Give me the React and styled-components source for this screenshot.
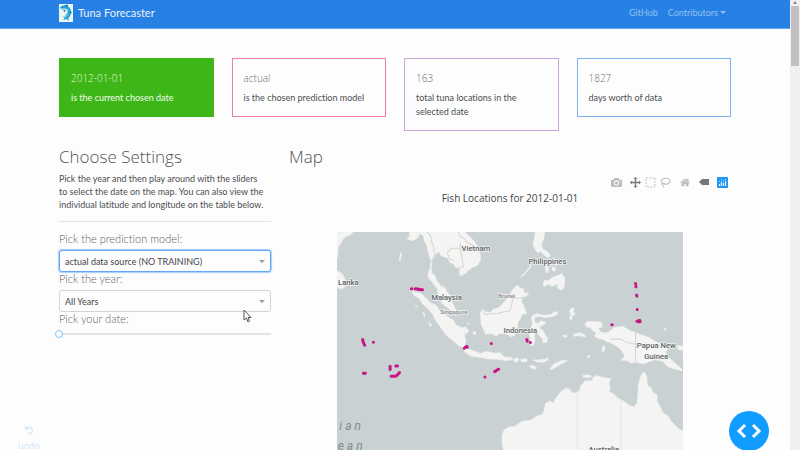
import React, { useState } from "react";
import styled, { createGlobalStyle, css } from "styled-components";

const GlobalStyle = createGlobalStyle`
  *, *::before, *::after { box-sizing: border-box; }
  body {
    margin: 0;
    background: #fdfdfe;
    color: #4c4e51;
    font-family: Lato, "Open Sans", sans-serif;
    font-size: 9px;
    line-height: 13px;
    font-variant-ligatures: none;
  }
  button, select, input { font: inherit; color: inherit; }
`;

const Window = styled.div`
  position: relative;
  display: flex;
  height: 100vh;
  overflow: hidden;
`;

const Page = styled.div`
  flex: 1;
  min-width: 0;
  overflow: hidden;
`;

const Scrollbar = styled.div`
  flex: none;
  width: 10px;
  padding: 6px 1px 0;
  background: #f0eff1;
`;

const ScrollUp = styled.div`
  width: 4px;
  margin: -5px auto 1px;
  border: 2px solid transparent;
  border-top: 0;
  border-bottom: 3px solid #8b8b8d;
`;

const ScrollThumb = styled.div`
  height: 60px;
  margin-top: 2px;
  background: #c1c0c2;
`;

const Container = styled.div`
  width: 100%;
  max-width: 708px;
  margin: 0 auto;
  padding: 0 18px;
`;

const Navbar = styled.header`
  background: #2780e3;
  border-bottom: 1px solid #69a6ef;
`;

const NavRow = styled(Container)`
  display: flex;
  align-items: center;
  height: 28px;
  padding-bottom: 3px;
`;

const Brand = styled.a`
  display: flex;
  align-items: center;
  gap: 5px;
  color: #e8f2fd;
  font-size: 11px;
  text-decoration: none;
`;

const NavLinks = styled.nav`
  display: flex;
  gap: 10px;
  margin-left: auto;
  padding-right: 5px;
`;

const navItem = css`
  display: flex;
  align-items: center;
  gap: 2px;
  padding: 0;
  border: 0;
  background: none;
  color: #92c0f3;
  font-size: 9px;
  line-height: 13px;
  text-decoration: none;
`;

const NavLink = styled.a`${navItem}`;
const NavButton = styled.button`${navItem}`;

const Caret = styled.span`
  border: 3px solid transparent;
  border-top-color: currentColor;
  border-bottom: 0;
`;

const Cards = styled.section`
  display: grid;
  grid-template-columns: repeat(4, 1fr);
  align-items: start;
  gap: 18px;
  margin-top: 29px;
`;

const Card = styled.article`
  padding: 12px 11px 11px;
  border: 1px solid ${(p) => p.$border};
  background: ${(p) => p.$fill || "transparent"};
  color: ${(p) => (p.$fill ? "#f1fbee" : "#4c4e51")};
  line-height: 14px;
`;

const CardTitle = styled.h2`
  margin: 0 0 6px;
  color: ${(p) => (p.$light ? "#e3f7dc" : "#6b6c6f")};
  font-family: "Open Sans", sans-serif;
  font-size: 10px;
  font-weight: 300;
  line-height: 14px;
`;

const CardText = styled.p`
  margin: 0;
`;

const Columns = styled.main`
  display: flex;
  gap: 18px;
  margin-top: 16px;
`;

const Settings = styled.section`
  flex: 0 0 calc(33.333% - 12px);
`;

const MapColumn = styled.section`
  flex: 1;
  min-width: 0;
`;

const Heading = styled.h1`
  margin: 0 0 5px;
  color: #515356;
  font-family: "Open Sans", sans-serif;
  font-size: 17px;
  font-weight: 300;
  line-height: 20px;
`;

const Intro = styled.p`
  margin: 0;
  padding-right: 6px;
`;

const Divider = styled.hr`
  margin: 10px 0;
  border: 0;
  border-top: 1px solid #e3e3e6;
`;

const Label = styled.label`
  display: block;
  margin-bottom: 4px;
  color: #606164;
  font-size: 11px;
  font-weight: 300;
  line-height: 14px;
`;

const SelectBox = styled.div`
  display: grid;
  align-items: center;
  & > * { grid-area: 1 / 1; }
`;

const Select = styled.select`
  appearance: none;
  width: 100%;
  height: 22px;
  padding: 0 20px 0 5px;
  border: 1px solid ${(p) => (p.$active ? "#62a8f5" : "#d4d4d6")};
  border-radius: 3px;
  outline: none;
  background: #fdfdfe;
  box-shadow: ${(p) => (p.$active ? "0 0 1px 1px #a5cffa" : "none")};
  color: #444548;
`;

const SelectCaret = styled(Caret)`
  justify-self: end;
  margin-right: 6px;
  color: #97989a;
  pointer-events: none;
`;

const Slider = styled.input`
  appearance: none;
  display: block;
  width: calc(100% + 4px);
  height: 8px;
  margin: 0 0 0 -4px;
  background: linear-gradient(#e4e4e6, #e4e4e6) 4px 3px / 100% 2px no-repeat;
  &::-webkit-slider-thumb {
    appearance: none;
    width: 8px;
    height: 8px;
    border: 1px solid #7cc8f5;
    border-radius: 50%;
    background: #fdfdfe;
  }
`;

const Modebar = styled.div`
  display: flex;
  justify-content: flex-end;
  gap: 4px;
  margin-top: 7px;
  padding-right: 1px;
`;

const ModeGroup = styled.div`
  display: flex;
`;

const ModeButton = styled.button`
  display: grid;
  place-items: center;
  width: 15px;
  height: 16px;
  padding: 0;
  border: 0;
  background: none;
  color: ${(p) => (p.$active ? "#777779" : "#bdbdbf")};
`;

const ChartTitle = styled.h3`
  margin: 1px 0 27px;
  color: #444649;
  font-family: "Open Sans", sans-serif;
  font-size: 10px;
  font-weight: 400;
  line-height: 14px;
  text-align: center;
`;

const MapFrame = styled.div`
  padding: 0 48px;
`;

const MapDrawing = styled.svg`
  display: block;
  width: 100%;
  background: #c9d1d3;
`;

const MapLabel = styled.text`
  fill: ${(p) => (p.$small ? "#858789" : "#626466")};
  stroke: #f4f4f3;
  stroke-width: 4px;
  stroke-linejoin: round;
  paint-order: stroke;
  font-family: Roboto, sans-serif;
  font-size: ${(p) => (p.$small ? 18 : 23)}px;
  font-weight: 500;
  text-anchor: middle;
`;

const OceanLabel = styled.text`
  fill: #838c90;
  font-family: Roboto, sans-serif;
  font-size: 36px;
  font-style: italic;
  letter-spacing: 9px;
`;

const DevButton = styled.button`
  position: absolute;
  right: 31px;
  bottom: -1px;
  display: grid;
  place-items: center;
  width: 40px;
  height: 40px;
  padding: 0;
  border: 0;
  border-radius: 50%;
  background: #119dff;
`;

const UndoButton = styled.button`
  position: absolute;
  left: 18px;
  bottom: -2px;
  display: grid;
  justify-items: center;
  gap: 4px;
  padding: 0;
  border: 0;
  background: none;
  color: #d3e7f6;
  font-family: "Open Sans", sans-serif;
`;

const Pointer = styled.svg`
  position: absolute;
  left: 243px;
  top: 309px;
  pointer-events: none;
`;

function TunaLogo() {
  return (
    <svg width="14" height="18" viewBox="0 0 42 54" aria-hidden="true">
      <rect width="42" height="54" fill="#eef6f5" />
      <path d="M3 12C6 4 18 1 27 7C39 15 40 32 28 43L30 50L23 46L12 49L17 42L11 37C18 40 27 36 30 27C26 35 20 36 17 34C24 31 27 24 23 17C18 18 9 18 3 12Z" fill="#2ba5dc" />
      <path d="M5 13C12 15 19 11 24 15C29 21 27 29 22 33C26 28 27 22 22 17C16 18 9 17 5 13Z" fill="#c9ecf2" />
      <path d="M15 5L26 1L27 9M34 20L39 26L33 29M13 18L16 25L20 18" fill="#167fbd" />
      <circle cx="10" cy="10" r="1.5" fill="#174a70" />
    </svg>
  );
}

const flip = "matrix(1 0 0 -1 0 850)";

function CameraIcon() {
  return (
    <svg width="11" height="11" viewBox="0 0 1000 1000" fill="currentColor">
      <path transform={flip} d="m500 450c-83 0-150-67-150-150 0-83 67-150 150-150 83 0 150 67 150 150 0 83-67 150-150 150z m400 150h-120c-16 0-34 13-39 29l-31 93c-6 15-23 28-40 28h-340c-16 0-34-13-39-28l-31-94c-6-15-23-28-40-28h-120c-55 0-100-45-100-100v-450c0-55 45-100 100-100h800c55 0 100 45 100 100v450c0 55-45 100-100 100z m-400-550c-138 0-250 112-250 250 0 138 112 250 250 250 138 0 250-112 250-250 0-138-112-250-250-250z m365 380c-19 0-35 16-35 35 0 19 16 35 35 35 19 0 35-16 35-35 0-19-16-35-35-35z" />
    </svg>
  );
}

function PanIcon() {
  return (
    <svg width="11" height="11" viewBox="0 0 1000 1000" fill="currentColor">
      <path transform={flip} d="m1000 350l-187 188 0-125-250 0 0 250 125 0-188 187-187-187 125 0 0-250-250 0 0 125-188-188 186-187 0 125 252 0 0-250-125 0 187-188 188 188-125 0 0 250 250 0 0-126 187 188z" />
    </svg>
  );
}

function BoxIcon() {
  return (
    <svg width="11" height="11" viewBox="0 0 11 11" fill="none" stroke="currentColor">
      <rect x="1" y="1" width="9" height="9" strokeDasharray="1.8 1.2" />
    </svg>
  );
}

function LassoIcon() {
  return (
    <svg width="11" height="11" viewBox="0 0 11 11" fill="none" stroke="currentColor" strokeWidth="1.1">
      <path d="M3 7C0 5 1 1.5 5.5 1.2C10 1 11 4 9 6C7.500 7.500 5 7.500 4 6.500C3 5.500 1.500 6.500 2.500 8C3 9 4 9 4 10.500" />
    </svg>
  );
}

function HomeIcon() {
  return (
    <svg width="10" height="11" viewBox="0 0 928 1000" fill="currentColor">
      <path transform={flip} d="m786 296v-267q0-15-11-26t-25-10h-214v214h-143v-214h-214q-15 0-25 10t-11 26v267q0 1 0 2t0 2l321 264 321-264q1-1 1-4z m124 39l-34-41q-5-5-12-6h-2q-7 0-12 3l-386 322-386-322q-7-4-13-4-7 2-12 7l-35 41q-4 5-3 13t6 12l401 334q18 15 42 15t43-15l136-114v109q0 8 5 13t13 5h107q8 0 13-5t5-13v-227l122-102q5-5 6-12t-4-13z" />
    </svg>
  );
}

function TagIcon() {
  return (
    <svg width="10" height="6" viewBox="0 0 10 6" fill="currentColor">
      <path d="M0 3L3 0H10V6H3Z" />
    </svg>
  );
}

function PlotlyIcon() {
  return (
    <svg width="11" height="11" viewBox="0 0 11 11">
      <rect width="11" height="11" rx="1" fill="#1f96f5" />
      <path d="M2.500 9V7M4.500 9V5M6.500 9V6M8.500 9V4" stroke="#e4f3ff" strokeWidth="1.2" />
      <path d="M2.500 5V4M4.500 3.500V2.500M6.500 4.500V3.500M8.500 3V2" stroke="#a9d8ff" strokeWidth="1.200" />
    </svg>
  );
}

const modeGroups = [
  [{ name: "Download plot", Icon: CameraIcon }],
  [
    { name: "Pan", Icon: PanIcon, active: true },
    { name: "Box select", Icon: BoxIcon },
    { name: "Lasso select", Icon: LassoIcon },
  ],
  [{ name: "Reset view", Icon: HomeIcon }],
  [{ name: "Toggle hover", Icon: TagIcon, active: true }],
  [{ name: "Produced with Plotly", Icon: PlotlyIcon }],
];

const land = [
  "M22 21H70L64 29L50 34L38 45L34 56L26 64L25 86L22 100Z",
  "M22 136L32 142L40 150L48 166L49 181L39 191L27 190L22 184Z",
  "M232 42L238 35L240 21H405L416 32L430 46L441 61L450 83L452 105L443 121L428 127L416 135L408 144L391 153L388 139L391 130L377 127L370 116L360 112L354 99L340 95L331 90L330 82L320 83L314 95L307 108L304 126L306 143L315 151L321 167L333 181L344 184L350 199L361 210L364 227L372 242L382 263L377 267L363 255L349 245L337 235L329 221L324 205L322 190L308 172L295 157L294 146L301 130L303 109L299 93L293 75L291 60L284 50L280 31L270 27L262 40L250 47Z",
  "M246 198L260 202L275 205L287 218L303 234L319 240L327 253L343 266L354 276L371 285L377 299L395 307L407 319L404 334L408 346L404 367L389 363L370 347L354 335L340 318L328 300L316 284L309 268L290 246L277 235L269 220L252 211Z",
  "M402 371L416 371L433 378L453 385L469 378L491 383L511 383L523 395L545 397L549 403L530 406L501 402L474 401L447 396L423 392L404 380Z",
  "M451 263L458 253L467 259L482 263L488 253L508 247L523 230L539 214L545 197L561 180L570 188L583 193L579 202L597 205L590 212L576 218L575 229L581 242L590 265L575 268L571 282L565 288L561 309L553 331L543 335L532 327L511 324L498 332L482 325L466 327L461 312L454 300Z",
  "M607 294L604 278L609 270L620 266L640 270L660 269L672 261L684 260L682 268L668 274L645 277L627 273L613 277L612 289L622 295L633 287L648 291L637 301L626 307L640 317L644 327L653 340L651 350L639 353L638 340L628 333L622 320L614 323L614 349L610 361L600 360L601 338L597 321L603 308Z",
  "M616 21H644L640 45L634 57L638 72L652 80L662 91L654 98L640 88L631 78L623 83L613 70L609 55L612 43Z",
  "M642 166L655 167L668 156L684 151L695 145L704 158L703 185L694 196L684 190L680 177L665 184L655 177L642 184L639 178Z",
  "M640 102L651 109L645 116L637 110ZM653 106L666 112L661 124L652 119ZM648 122L656 129L653 144L645 136ZM668 99L680 104L685 118L677 121ZM666 124L677 130L674 140L666 135Z",
  "M573 153L586 142L598 125L605 117L600 129L586 145L574 156Z",
  "M764 296L772 289L791 289L813 291L816 305L804 309L813 322L832 323L852 307L878 304L901 317L930 328L957 337L980 352L1001 357L1012 373L1005 380L1014 396L1032 412L1053 430L1056 437L1034 431L1012 424L997 408L974 403L957 409L941 416L916 411L903 413L889 406L873 405L884 392L869 370L845 354L827 349L819 342L804 340L792 332L799 325L786 315L781 306L770 306Z",
  "M718 257L726 248L733 250L729 260L736 267L726 271L725 285L718 281L722 267Z",
  "M700 329L711 332L708 337L699 334ZM730 327L749 323L764 329L767 335L747 332L731 333ZM817 363L824 363L823 376L816 379ZM771 393L779 389L780 394L774 398Z",
  "M551 402L562 397L567 404L560 411L552 407ZM571 403L590 400L591 409L575 410ZM609 404L625 404L646 402L653 396L654 404L642 411L619 410ZM598 422L610 421L620 427L614 432L602 427ZM661 428L673 415L690 407L711 404L708 409L689 419L672 429L662 434Z",
  "M758 450L775 449L785 453L774 457L760 456Z",
  "M521 675L516 652L516 633L522 614L538 604L554 603L576 588L603 584L619 573L638 567L642 556L646 535L658 527L670 533L680 514L693 499L706 489L721 492L725 502L737 503L749 494L751 482L765 467L790 466L786 459L799 450L812 455L832 459L843 459L836 475L841 486L836 499L851 506L862 518L881 528L896 540L911 544L920 534L923 504L924 480L929 460L936 443L944 442L950 458L951 480L963 487L967 500L980 509L981 530L990 544L996 560L1015 574L1022 587L1034 599L1044 610L1058 616V780H521Z",
  "M208 105L213 83L216 84L211 108ZM258 240L263 246L258 245ZM278 261L286 267L284 274ZM297 287L305 301L301 305ZM398 306L409 306L416 316L411 325L401 316ZM429 320L438 320L437 327L430 327ZM412 292L417 294L416 300Z",
  "M1040 360L1058 364V376L1043 372ZM1000 309L1007 311L1005 317Z",
];

const borders = [
  "M292 21C304 35 310 43 304 50C316 61 307 75 315 90L303 111",
  "M386 21L391 35L402 39L411 52L426 59L432 67",
  "M391 54V70L364 70L352 84L359 101L371 107",
  "M391 70L397 100L400 125L388 128",
  "M331 177L341 188",
  "M459 258L466 268L489 266L506 264L521 260L537 259L545 240L548 221L580 217",
  "M916 322V413",
  "M840 342L868 341L886 350L915 357",
];

const catches = [
  "M245 191H246M256 191H260M260 192H265M266 193H272M274 194H278",
  "M99 343V347M100 349L102 354M104 359L105 360M131 351V351",
  "M101 444H107M181 423V433M198 422H203M184 453H196M197 453L203 449M206 445L209 442",
  "M403 369L406 366M410 363L412 366M484 355H484",
  "M465 455H465M494 439L499 436M502 434L506 432",
  "M590 343L592 348M601 352H601M845 299H846",
  "M916 175V176M917 183V185M919 210L920 213M921 253H921",
  "M920 288H924M925 286V290M929 286V290",
];

function FishMap() {
  return (
    <MapDrawing viewBox="22 21 1036 720" role="img" aria-label="Fish locations">
      {land.map((d) => (
        <path key={d} d={d} fill="#f4f4f3" stroke="#edf0ef" strokeWidth="2" strokeLinejoin="round" />
      ))}
      {borders.map((d) => (
        <path key={d} d={d} fill="none" stroke="#d2d4d4" strokeWidth="3" />
      ))}
      <path d="M741 502V741M872 524V741" stroke="#e6e6e6" strokeWidth="3" />
      <MapLabel x="438" y="79">Vietnam</MapLabel>
      <MapLabel x="652" y="117">Philippines</MapLabel>
      <MapLabel x="56" y="179">Lanka</MapLabel>
      <MapLabel x="350" y="224">Malaysia</MapLabel>
      <MapLabel x="372" y="268" $small>Singapore</MapLabel>
      <MapLabel x="530" y="220" $small>Brunei</MapLabel>
      <MapLabel x="571" y="323">Indonesia</MapLabel>
      <MapLabel x="978" y="369">Papua New</MapLabel>
      <MapLabel x="978" y="400">Guinea</MapLabel>
      <MapLabel x="821" y="679">Australia</MapLabel>
      <OceanLabel x="29" y="615">ian</OceanLabel>
      <OceanLabel x="24" y="674">ean</OceanLabel>
      {catches.map((d) => (
        <path key={d} d={d} fill="none" stroke="#c71585" strokeWidth="9" strokeLinecap="round" />
      ))}
    </MapDrawing>
  );
}

const stats = [
  { title: "2012-01-01", text: "is the current chosen date", border: "#3fb618", fill: "#3fb618" },
  { title: "actual", text: "is the chosen prediction model", border: "#f07f98" },
  { title: "163", text: "total tuna locations in the selected date", border: "#c9a6dc" },
  { title: "1827", text: "days worth of data", border: "#7eb4f0" },
];

export default function App() {
  const [day, setDay] = useState(0);

  return (
    <>
      <GlobalStyle />
      <Window>
        <Page>
          <Navbar>
            <NavRow>
              <Brand href="#">
                <TunaLogo />
                Tuna Forecaster
              </Brand>
              <NavLinks>
                <NavLink href="#github">GitHub</NavLink>
                <NavButton type="button">
                  Contributors
                  <Caret />
                </NavButton>
              </NavLinks>
            </NavRow>
          </Navbar>
          <Container>
            <Cards>
              {stats.map((s) => (
                <Card key={s.title} $border={s.border} $fill={s.fill}>
                  <CardTitle $light={Boolean(s.fill)}>{s.title}</CardTitle>
                  <CardText>{s.text}</CardText>
                </Card>
              ))}
            </Cards>
            <Columns>
              <Settings>
                <Heading>Choose Settings</Heading>
                <Intro>
                  Pick the year and then play around with the sliders to select the date on the map.
                  You can also view the individual latitude and longitude on the table below.
                </Intro>
                <Divider />
                <Label htmlFor="model">Pick the prediction model:</Label>
                <SelectBox>
                  <Select id="model" $active>
                    <option>actual data source (NO TRAINING)</option>
                  </Select>
                  <SelectCaret />
                </SelectBox>
                <Label htmlFor="year">Pick the year:</Label>
                <SelectBox>
                  <Select id="year">
                    <option>All Years</option>
                  </Select>
                  <SelectCaret />
                </SelectBox>
                <Label htmlFor="date">Pick your date:</Label>
                <Slider
                  id="date"
                  type="range"
                  min="0"
                  max="1826"
                  value={day}
                  onChange={(e) => setDay(Number(e.target.value))}
                />
              </Settings>
              <MapColumn>
                <Heading>Map</Heading>
                <Modebar>
                  {modeGroups.map((group) => (
                    <ModeGroup key={group[0].name}>
                      {group.map(({ name, Icon, active }) => (
                        <ModeButton key={name} type="button" aria-label={name} $active={active}>
                          <Icon />
                        </ModeButton>
                      ))}
                    </ModeGroup>
                  ))}
                </Modebar>
                <ChartTitle>Fish Locations for 2012-01-01</ChartTitle>
                <MapFrame>
                  <FishMap />
                </MapFrame>
              </MapColumn>
            </Columns>
          </Container>
        </Page>
        <Scrollbar>
          <ScrollUp />
          <ScrollThumb />
        </Scrollbar>
        <UndoButton type="button">
          <svg width="10" height="10" viewBox="0 0 10 10" fill="none" stroke="currentColor" strokeWidth="1.2">
            <path d="M1.500 1V4H4.500M1.500 4C4 1 8.500 2 8.500 5.500C8.500 8 6 9 4 8.500" />
          </svg>
          undo
        </UndoButton>
        <DevButton type="button" aria-label="Developer tools">
          <svg width="26" height="16" viewBox="0 0 26 16" fill="none" stroke="#fff" strokeWidth="3">
            <path d="M9 2L3 8L9 14M17 2L23 8L17 14" />
          </svg>
        </DevButton>
        <Pointer width="9" height="14" viewBox="0 0 9 14">
          <path d="M1 1V11L3.500 9L5 13L6.500 12L5 8.500H8Z" fill="#fff" stroke="#515256" />
        </Pointer>
      </Window>
    </>
  );
}
